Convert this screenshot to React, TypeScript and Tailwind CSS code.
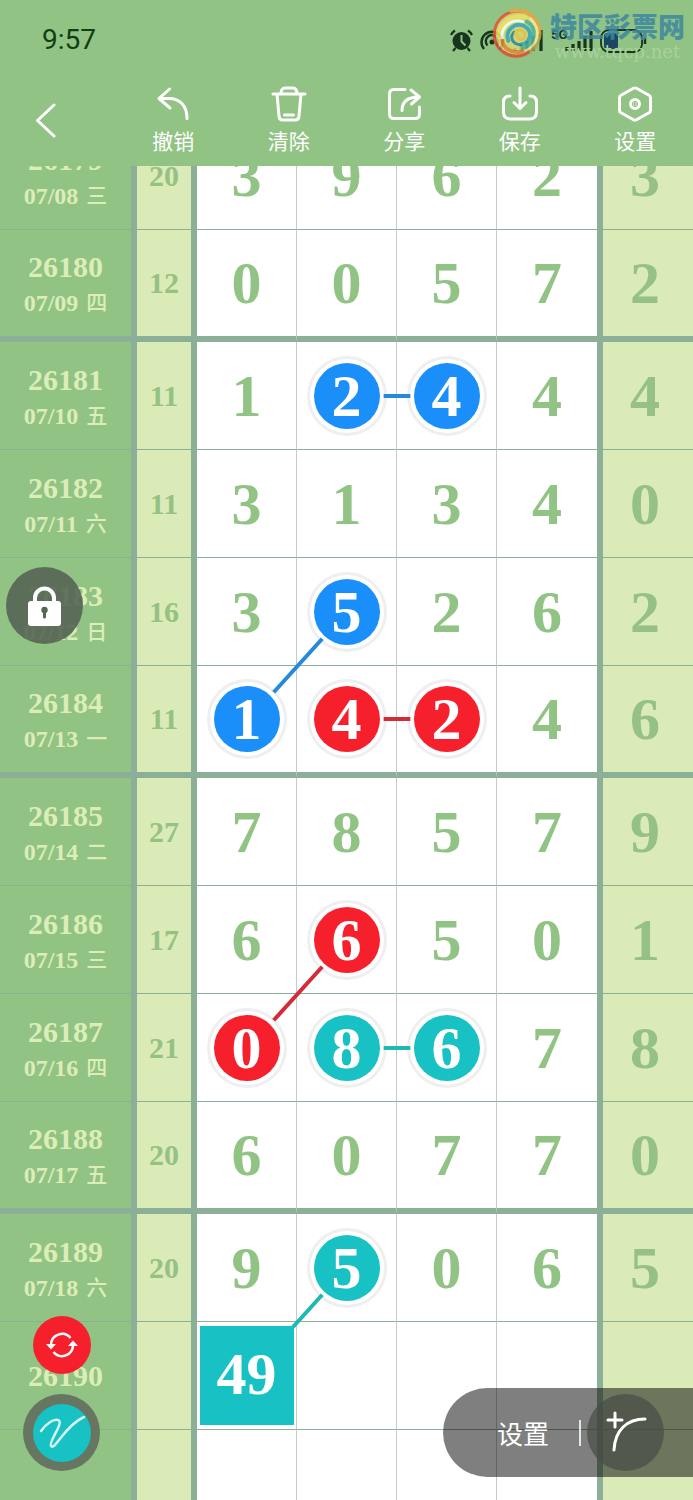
import type { ReactNode } from "react";

type Tone = "blue" | "red" | "teal";

interface Mark {
  tone: Tone;
  link?: "right" | "downLeft";
}

interface Draw {
  issue: string;
  date?: string;
  weekday?: string;
  sum?: number;
  digits: number[];
  last?: number;
  marks?: Record<number, Mark>;
  pick?: string;
  groupEnd?: boolean;
}

const draws: Draw[] = [
  { issue: "26179", date: "07/08", weekday: "三", sum: 20, digits: [3, 9, 6, 2], last: 3 },
  { issue: "26180", date: "07/09", weekday: "四", sum: 12, digits: [0, 0, 5, 7], last: 2, groupEnd: true },
  { issue: "26181", date: "07/10", weekday: "五", sum: 11, digits: [1, 2, 4, 4], last: 4, marks: { 1: { tone: "blue", link: "right" }, 2: { tone: "blue" } } },
  { issue: "26182", date: "07/11", weekday: "六", sum: 11, digits: [3, 1, 3, 4], last: 0 },
  { issue: "26183", date: "07/12", weekday: "日", sum: 16, digits: [3, 5, 2, 6], last: 2, marks: { 1: { tone: "blue", link: "downLeft" } } },
  { issue: "26184", date: "07/13", weekday: "一", sum: 11, digits: [1, 4, 2, 4], last: 6, groupEnd: true, marks: { 0: { tone: "blue" }, 1: { tone: "red", link: "right" }, 2: { tone: "red" } } },
  { issue: "26185", date: "07/14", weekday: "二", sum: 27, digits: [7, 8, 5, 7], last: 9 },
  { issue: "26186", date: "07/15", weekday: "三", sum: 17, digits: [6, 6, 5, 0], last: 1, marks: { 1: { tone: "red", link: "downLeft" } } },
  { issue: "26187", date: "07/16", weekday: "四", sum: 21, digits: [0, 8, 6, 7], last: 8, marks: { 0: { tone: "red" }, 1: { tone: "teal", link: "right" }, 2: { tone: "teal" } } },
  { issue: "26188", date: "07/17", weekday: "五", sum: 20, digits: [6, 0, 7, 7], last: 0, groupEnd: true },
  { issue: "26189", date: "07/18", weekday: "六", sum: 20, digits: [9, 5, 0, 6], last: 5, marks: { 1: { tone: "teal", link: "downLeft" } } },
  { issue: "26190", digits: [], pick: "49" },
  { issue: "", digits: [] },
];

const fills: Record<Tone, string> = {
  blue: "bg-[#1a8ffa]",
  red: "bg-[#f6202d]",
  teal: "bg-[#17c1c4]",
};

const strokes: Record<Tone, string> = {
  blue: "stroke-[#2589dc]",
  red: "stroke-[#d32c38]",
  teal: "stroke-[#1fb8b4]",
};

function Icon({ children }: { children: ReactNode }) {
  return (
    <svg viewBox="0 0 36 36" className="size-9 fill-none stroke-white stroke-3" strokeLinecap="round" strokeLinejoin="round" aria-hidden="true">
      {children}
    </svg>
  );
}

const tools = [
  {
    label: "撤销",
    icon: <path d="M14.5 3 4 12.5 15 22M4 12.5h10C25 12.5 32 20 32 32.5" />,
  },
  {
    label: "清除",
    icon: (
      <>
        <path d="M2 8h32M10 8c0-4 1-6 4-6h8c3 0 4 2 4 6M6 8l2 22q.4 4 3.5 4h13q3.1 0 3.5-4l2-22" />
        <path d="M13.5 29h9" />
      </>
    ),
  },
  {
    label: "分享",
    icon: (
      <>
        <path d="M19 3.5H8Q3.500 3.5 3.5 8v20q0 4.5 4.5 4.5h21q4.5 0 4.5-4.5v-7" />
        <path d="M16 24.5C16 16 20.5 11 33 11M25 4l8.5 7-8 7" />
      </>
    ),
  },
  {
    label: "保存",
    icon: (
      <>
        <path d="M8 10q-6.5 0-6.5 6v10q0 7 7 7h19q7 0 7-7V16q0-6-6.5-6" />
        <path d="M18 2v20M12 16.5l6 6 6-6" />
      </>
    ),
  },
  {
    label: "设置",
    icon: (
      <>
        <path d="M16.5 2.300q1.500-.8 3 0L32 9.200q1.500.8 1.500 2.500v12.600q0 1.700-1.500 2.500l-12.500 6.900q-1.500.8-3 0L4 26.800q-1.500-.8-1.500-2.500V11.700Q2.500 10 4 9.200Z" />
        <circle cx="18" cy="18" r="4.500" />
        <circle cx="18" cy="18" r="0.300" />
      </>
    ),
  },
];

function StatusIcons() {
  return (
    <svg viewBox="0 0 204 36" className="h-9 w-[204px]" aria-hidden="true">
      <g className="fill-none stroke-[#16351c]">
        <circle cx="12.5" cy="19" r="9" className="fill-[#16351c] stroke-none" />
        <path d="M2 13a12 12 0 0 1 4-4.500M23 13a12 12 0 0 0-4-4.500M6.500 26 4 29M18.500 26l2.500 3" strokeWidth="2.2" />
        <path d="M12.500 13v6.500l4 4" className="stroke-[#91c384]" strokeWidth="2" />
        <path d="M35 27a10.500 10.500 0 1 1 16 0M38.500 23.500a6.200 6.200 0 1 1 9 0" strokeWidth="2.4" />
        <circle cx="43" cy="20" r="2.5" className="fill-[#16351c] stroke-none" />
        <path d="M66 29v-3M72 29v-6M78 29v-10M84 29V14M92 29V8" strokeWidth="3.2" />
        <path d="M118 29v-4M124 29v-7M130 29v-10M136 29V14M142 29V9" strokeWidth="3.2" />
        <rect x="152" y="8" width="41" height="22" rx="8" strokeWidth="1.8" />
        <rect x="155" y="11" width="14" height="16" rx="3" className="fill-[#1c4463] stroke-none" />
        <path d="M196 16v6" strokeWidth="2.5" />
      </g>
      <text x="102" y="17" className="fill-[#16351c] font-['Roboto',sans-serif] text-[13px] font-bold">5G</text>
    </svg>
  );
}

function SiteBadge() {
  return (
    <div className="absolute top-2 right-2 flex items-center gap-2">
      <svg viewBox="2 2 52 52" className="size-[50px] fill-none opacity-85" strokeLinecap="round" aria-hidden="true">
        <circle cx="28" cy="28" r="24" className="fill-[#d8d77c]" />
        <path d="M6 37A24 24 0 0 1 34 5" stroke="#e5533a" strokeWidth="3" />
        <path d="M22 4A24 24 0 0 1 51 32" stroke="#f2a33c" strokeWidth="4" />
        <path d="M51 30A24 24 0 0 1 14 47" stroke="#b9a04c" strokeWidth="4" />
        <path d="M4 29C6 50 28 56 40 47" stroke="#d9493a" strokeWidth="3" />
        <path d="M9 32C8 18 22 6 38 11" stroke="#f6e45a" strokeWidth="4" />
        <path d="M14 37C8 24 20 11 34 15" stroke="#ffffff" strokeWidth="3" />
        <path d="M42 12C54 24 50 40 36 45" stroke="#f4ee9a" strokeWidth="3" />
        <path d="M38 15C50 22 47 39 34 43" stroke="#55b69a" strokeWidth="4" />
        <path d="M34 46C24 49 13 43 13 35" stroke="#e9852f" strokeWidth="4" />
        <path d="M19 35C15 24 26 15 36 20 46 26 41 38 32 39" stroke="#37a9b8" strokeWidth="4" />
        <path d="M32 39C23 39 20 31 25 26" stroke="#2f87a0" strokeWidth="3" />
        <path d="M26 28C28 21 39 24 36 31 34 35 28 34 29 30" stroke="#f0c13e" strokeWidth="3" />
      </svg>
      <div className="flex flex-col items-center">
        <span className="font-['Noto_Sans_CJK_SC',sans-serif] text-[27px] leading-9 font-black text-[#3d87a0]/85">特区彩票网</span>
        <span className="font-['DejaVu_Serif',serif] text-lg leading-4 text-[#a9d29c]">www.tqcp.net</span>
      </div>
    </div>
  );
}

function Connector({ tone, link }: { tone: Tone; link: "right" | "downLeft" }) {
  if (link === "right") {
    return (
      <svg className={`absolute top-1/2 left-1/2 z-10 h-1 w-full -translate-y-1/2 stroke-4 ${strokes[tone]}`} aria-hidden="true">
        <line x1="37%" y1="50%" x2="64%" y2="50%" />
      </svg>
    );
  }
  return (
    <svg className={`absolute top-1/2 right-1/2 z-10 size-full stroke-4 ${strokes[tone]}`} aria-hidden="true">
      <line x1="75%" y1="25%" x2="26%" y2="75%" />
    </svg>
  );
}

function DigitCell({ value, mark }: { value?: number; mark?: Mark }) {
  if (!mark) {
    return <>{value}</>;
  }
  return (
    <>
      <span className={`relative mx-auto flex size-[66px] items-center justify-center rounded-full text-white shadow-[0_0_0_4px_#fff,0_0_0_7px_#efefef] ${fills[mark.tone]}`}>
        {value}
      </span>
      {mark.link && <Connector tone={mark.tone} link={mark.link} />}
    </>
  );
}

function TrendTable() {
  return (
    <table className="-mt-11 w-full table-fixed border-separate border-spacing-0 text-center font-['Liberation_Serif','Noto_Sans_CJK_SC',serif] font-bold">
      <colgroup>
        <col className="w-[137px] bg-[#91c384]" />
        <col className="w-[60px] bg-[#dbebb8]" />
        <col className="w-[100px] bg-white" />
        <col className="w-[100px] bg-white" />
        <col className="w-[100px] bg-white" />
        <col className="w-[106px] bg-white" />
        <col className="w-[90px] bg-[#dbebb8]" />
      </colgroup>
      <tbody>
        {draws.map((draw, row) => {
          const line = draw.groupEnd ? "border-b-6" : "border-b";
          return (
            <tr key={row} className={draw.groupEnd ? "h-28" : "h-[108px]"}>
              <th scope="row" className={`border-r-6 border-[#8bb097] p-0 text-[#dcedb8] ${line}`}>
                <div className={`text-3xl leading-9 ${draw.date ? "pt-1" : ""}`}>{draw.issue}</div>
                {draw.date && (
                  <div className="flex items-center justify-center gap-2 text-2xl leading-9">
                    <span>{draw.date}</span>
                    <span className="text-[21px] font-medium">{draw.weekday}</span>
                  </div>
                )}
              </th>
              <td className={`border-r-6 border-[#8bb097] p-0 text-3xl text-[#95c184] ${line}`}>{draw.sum}</td>
              {[0, 1, 2, 3].map((i) => {
                const mark = draw.marks?.[i];
                return (
                  <td
                    key={i}
                    className={`p-0 text-[60px] leading-none text-[#91c384] ${line} ${mark ? "relative" : ""} ${i === 3 ? "border-r-6 border-[#8bb097]" : "border-r border-r-[#c3cdc5] border-b-[#8bb097]"}`}
                  >
                    {i === 0 && draw.pick ? (
                      <span className="relative z-20 mx-auto flex h-[99px] w-[94px] items-center justify-center bg-[#17c1c4] pb-1 text-white">{draw.pick}</span>
                    ) : (
                      <DigitCell value={draw.digits[i]} mark={mark} />
                    )}
                  </td>
                );
              })}
              <td className={`border-[#8bb097] p-0 pr-1.5 text-[60px] leading-none text-[#95c184] ${line}`}>{draw.last}</td>
            </tr>
          );
        })}
      </tbody>
    </table>
  );
}

export default function App() {
  return (
    <div className="relative flex h-screen flex-col overflow-hidden bg-[#91c384] font-['Noto_Sans_CJK_SC',sans-serif]">
      <header className="z-30 shrink-0 bg-[#91c384] text-white">
        <div className="relative flex h-20 items-center justify-between pr-10 pl-[42px]">
          <span className="font-['Roboto',sans-serif] text-[28px] leading-8 text-[#123f12]">9:57</span>
          <StatusIcons />
          <SiteBadge />
        </div>
        <nav className="grid h-[86px] grid-cols-6">
          <button aria-label="返回" className="flex items-center pb-1.5 pl-7">
            <Icon>
              <path d="M26 3 9.500 18.500 26 34" />
            </Icon>
          </button>
          {tools.map((tool) => (
            <button key={tool.label} className="flex flex-col items-center pt-1.5">
              <Icon>{tool.icon}</Icon>
              <span className="text-[21px] leading-9">{tool.label}</span>
            </button>
          ))}
        </nav>
      </header>

      <main className="min-h-0 flex-1 overflow-hidden">
        <TrendTable />
      </main>

      <button aria-label="锁定" className="absolute top-[567px] left-1.5 z-30 flex size-[77px] items-center justify-center rounded-full bg-[#576555]/90">
        <svg viewBox="0 0 40 44" className="h-11 w-10" aria-hidden="true">
          <path d="M10 20v-6a9.500 9.500 0 0 1 19 0v6" className="fill-none stroke-white stroke-4" />
          <rect x="3" y="17" width="33" height="25" rx="3" className="fill-white" />
          <circle cx="19.500" cy="26" r="3.200" className="fill-[#576555]" />
          <path d="M19.500 26v7" className="stroke-[#576555] stroke-3" strokeLinecap="round" />
        </svg>
      </button>

      <div className="absolute bottom-[29px] left-[23px] z-30 flex flex-col items-center gap-5">
        <button aria-label="刷新" className="flex size-[58px] items-center justify-center rounded-full bg-[#f6202d]">
          <svg viewBox="0 0 32 32" className="size-8 fill-none stroke-white stroke-[2.5]" aria-hidden="true">
            <path d="M5 16A11 11 0 0 1 24.500 9M27 16A11 11 0 0 1 7.500 23" />
            <path d="M0 15h10l-5 5.500ZM22 17h10l-5-5.500Z" className="fill-white stroke-none" />
          </svg>
        </button>
        <button aria-label="画笔" className="flex size-[77px] items-center justify-center rounded-full bg-[#667661]">
          <span className="flex size-[58px] items-center justify-center rounded-full bg-[#17c1c4]">
            <svg viewBox="0 0 58 58" className="size-[58px] fill-none stroke-[#d5f7f3] stroke-[2.5]" strokeLinecap="round" aria-hidden="true">
              <path d="M8 27C13 20 20 15 25 16 32 18 15 38 18 42 22 47 32 21 51 13" />
            </svg>
          </span>
        </button>
      </div>

      <div className="absolute right-0 bottom-[23px] z-30 flex h-[89px] w-[250px] items-center rounded-l-full bg-black/50 pl-[54px] text-white">
        <button className="text-[26px] leading-9">设置</button>
        <span className="ml-[30px] h-[26px] w-0.5 bg-white/80" />
        <button aria-label="添加连线" className="ml-1.5 flex size-[77px] items-center justify-center rounded-full bg-[#494c46]/70">
          <svg viewBox="0 0 44 44" className="size-11 fill-none stroke-white stroke-3" strokeLinecap="round" aria-hidden="true">
            <path d="M11 2v14M4 9h14M10 39C11 19 23 8 41 8" />
          </svg>
        </button>
      </div>
    </div>
  );
}
